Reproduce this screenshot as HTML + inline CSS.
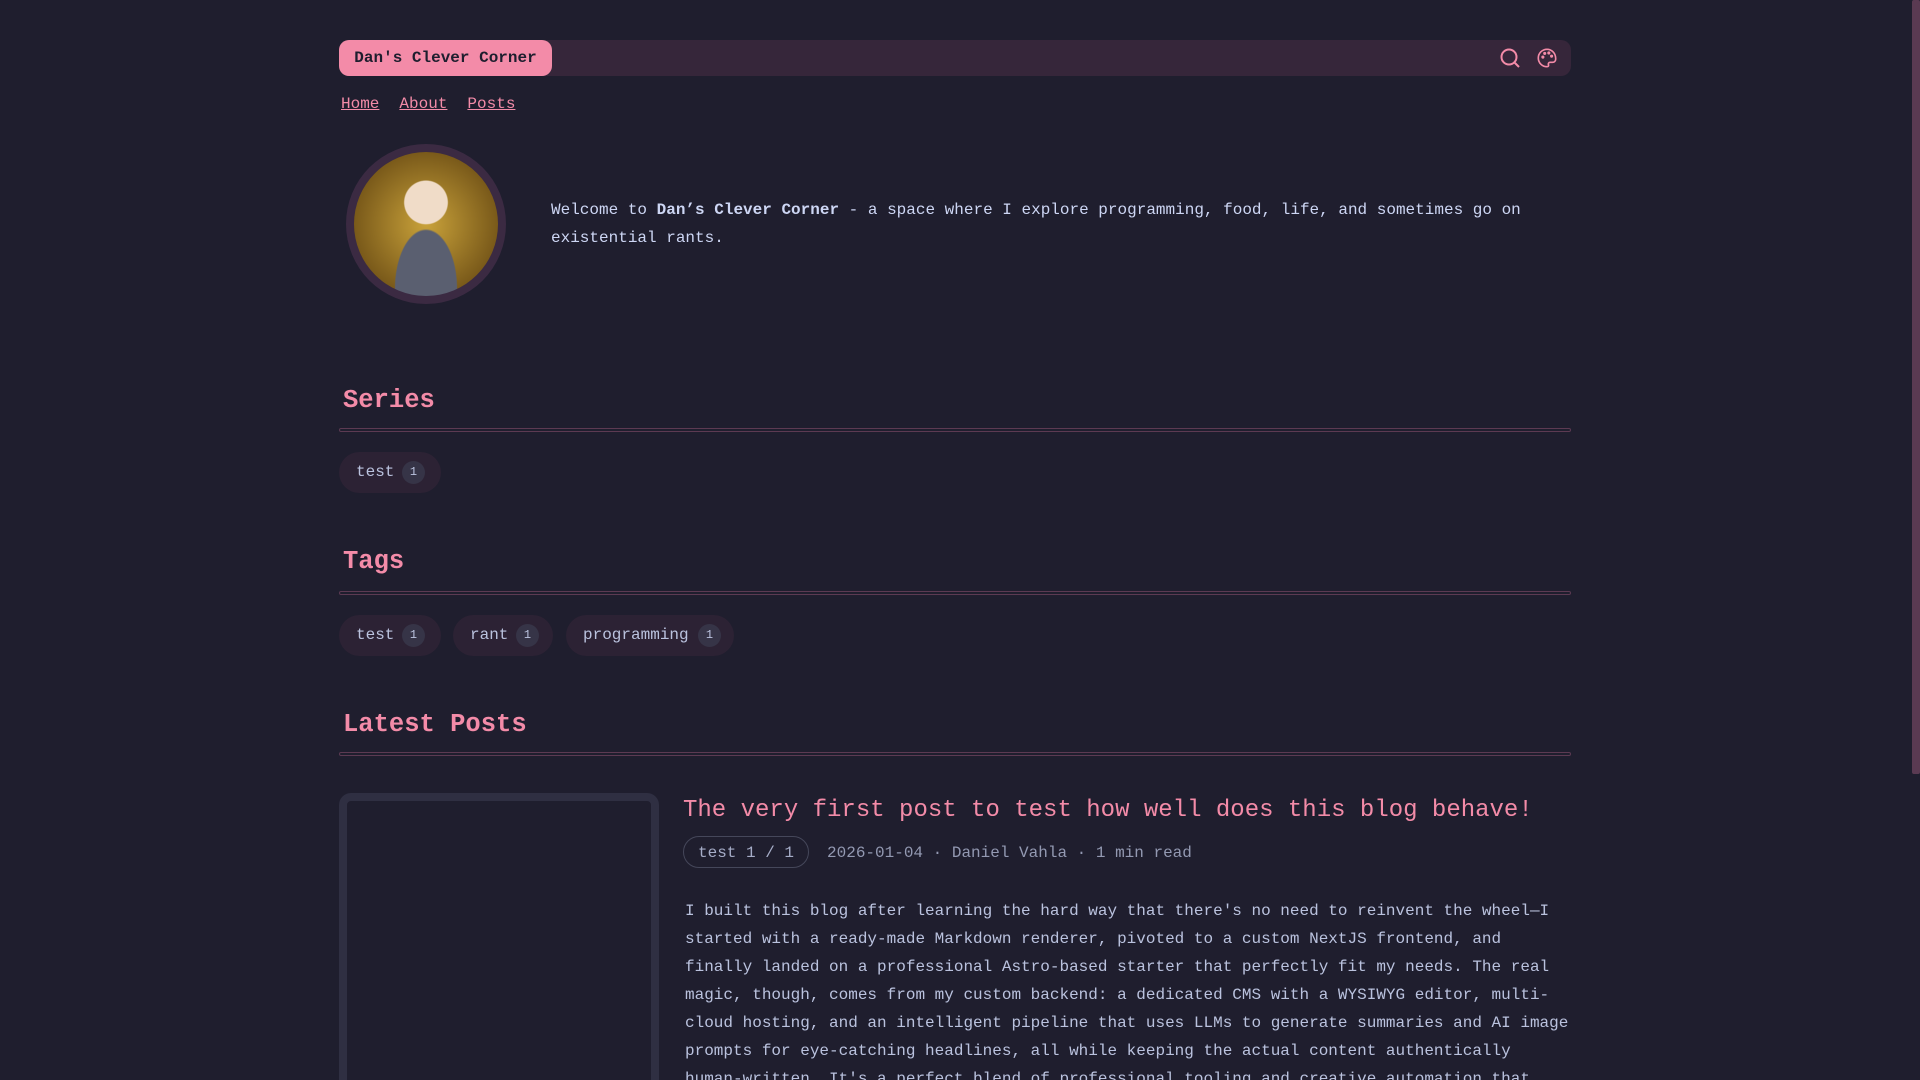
<!DOCTYPE html>
<html><head><meta charset="utf-8"><style>
*{box-sizing:border-box;margin:0;padding:0}
html,body{width:1920px;height:1080px;overflow:hidden;background:#1f1e2e;font-family:"Liberation Mono",monospace;color:#cdd6f4}
.wrap{position:absolute;left:339px;width:1232px;top:0;height:1080px;overflow:hidden}
.bar{position:absolute;top:40px;left:0;width:1232px;height:36px;background:#36263a;border-radius:10px}
.logo{position:absolute;left:0;top:0;height:36px;width:213px;background:#f38ba8;border-radius:10px;color:#1e1e2e;font-weight:bold;font-size:16px;line-height:36px;text-align:center}
.ic{position:absolute;top:7px}
.nav{position:absolute;top:95px;left:2px;font-size:16px}
.nav a{color:#f38ba8;text-decoration:underline;margin-right:20px}
.av{position:absolute;left:7px;top:144px;width:160px;height:160px;border-radius:50%;background:#3b2a42;padding:8px}
.av div{width:100%;height:100%;border-radius:50%;background:radial-gradient(circle at 50% 35%,#f0dcc8 0 18%,transparent 19%),radial-gradient(ellipse at 50% 95%,#5a5f70 0 30%,transparent 31%),radial-gradient(circle,#c9a23a,#7a5a1a 70%,#3a2a10)}
.wel{position:absolute;left:212px;top:196px;width:1010px;font-size:16px;line-height:28px;color:#cdd6f4}
.h{position:absolute;left:4px;font-size:25.5px;font-weight:bold;color:#f38ba8}
.hr{position:absolute;left:0;width:1232px;height:4px;border:1px solid #5c3a52;border-radius:2px}
.chip{position:absolute;height:41px;background:#2c2234;border-radius:21px;font-size:16px;line-height:41px;color:#bac2de;padding-left:17px}
.chip span{position:absolute;top:9px;width:23px;height:23px;border-radius:50%;background:#363447;font-size:12px;line-height:23px;text-align:center}
.card{position:absolute;left:0;top:793px;width:320px;height:300px;border:8px solid #2f2f42;border-radius:12px;background:#1f1e2e}
.title{position:absolute;left:344px;top:797px;font-size:24px;color:#f38ba8;white-space:nowrap}
.meta{position:absolute;left:344px;top:836px;font-size:16px;color:#9399b2;white-space:nowrap;line-height:32px}
.badge{display:inline-block;border:1px solid #45475a;border-radius:16px;padding:0 14px;height:32px;margin-right:18px;color:#a6adc8}
.body{position:absolute;left:346px;top:897px;width:890px;font-size:16px;line-height:28px;color:#bac2de}
.sb{position:absolute;right:0;top:0;width:8px;height:774px;background:#5a3a52;border-radius:2px}
</style></head><body>
<div class="wrap">
<div class="bar"><div class="logo">Dan's Clever Corner</div>
<svg class="ic" style="left:1160px" width="22" height="22" viewBox="0 0 22 22" fill="none" stroke="#f38ba8" stroke-width="2"><circle cx="10" cy="10" r="7.5"/><path d="M15.5 15.5L20 20"/></svg>
<svg class="ic" style="left:1196px" width="24" height="22" viewBox="0 0 24 24" fill="none" stroke="#f38ba8" stroke-width="1.8"><path d="M12 2.5a9.5 9.5 0 1 0 0 19c1.6 0 2-1 1.6-2.2-.5-1.3.3-2.6 1.8-2.6H18c2.2 0 3.5-1.7 3.5-3.8C21.5 6.6 17.2 2.5 12 2.5z"/><circle cx="7.5" cy="11" r=".8" fill="#f38ba8"/><circle cx="9.5" cy="7" r=".8" fill="#f38ba8"/><circle cx="14" cy="6.5" r=".8" fill="#f38ba8"/><circle cx="17" cy="10" r=".8" fill="#f38ba8"/></svg>
</div>
<div class="nav"><a>Home</a><a>About</a><a>Posts</a></div>
<div class="av"><div></div></div>
<div class="wel">Welcome to <b>Dan’s Clever Corner</b> - a space where I explore programming, food, life, and sometimes go on existential rants.</div>
<div class="h" style="top:386px">Series</div><div class="hr" style="top:428px"></div>
<div class="chip" style="left:0;top:452px;width:102px">test<span style="left:63px">1</span></div>
<div class="h" style="top:547px">Tags</div><div class="hr" style="top:591px"></div>
<div class="chip" style="left:0;top:615px;width:102px">test<span style="left:63px">1</span></div>
<div class="chip" style="left:114px;top:615px;width:100px">rant<span style="left:63px">1</span></div>
<div class="chip" style="left:227px;top:615px;width:168px">programming<span style="left:132px">1</span></div>
<div class="h" style="top:710px">Latest Posts</div><div class="hr" style="top:752px"></div>
<div class="card"></div>
<div class="title">The very first post to test how well does this blog behave!</div>
<div class="meta"><span class="badge">test 1 / 1</span>2026-01-04 · Daniel Vahla · 1 min read</div>
<div class="body">I built this blog after learning the hard way that there's no need to reinvent the wheel—I started with a ready-made Markdown renderer, pivoted to a custom NextJS frontend, and finally landed on a professional Astro-based starter that perfectly fit my needs. The real magic, though, comes from my custom backend: a dedicated CMS with a WYSIWYG editor, multi-cloud hosting, and an intelligent pipeline that uses LLMs to generate summaries and AI image prompts for eye-catching headlines, all while keeping the actual content authentically human-written. It's a perfect blend of professional tooling and creative automation that</div>
</div>
<div class="sb"></div>
</body></html>
